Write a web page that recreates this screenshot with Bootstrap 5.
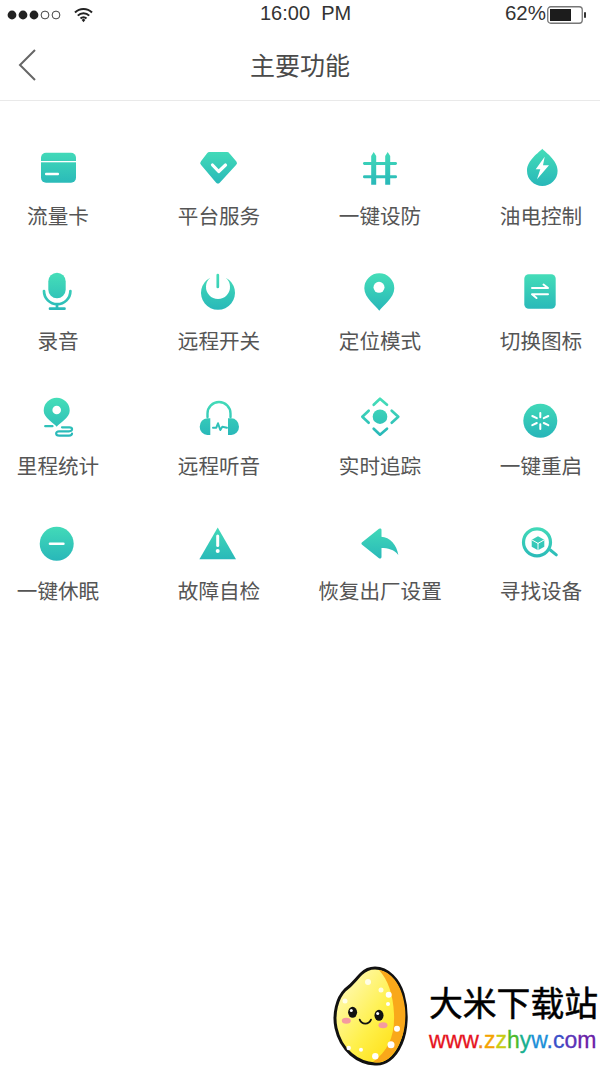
<!DOCTYPE html>
<html lang="zh-CN">
<head>
<meta charset="utf-8">
<title>主要功能</title>
<link rel="stylesheet" href="https://cdn.jsdelivr.net/npm/bootstrap@5.3.0/dist/css/bootstrap.min.css">
<style>
html,body{width:600px;height:1067px;overflow:hidden;background:#fff}
body{font-family:"Liberation Sans","Noto Sans CJK SC",sans-serif}
.screen{height:1067px}
.statusbar{height:30px;color:#333;font-size:20px;line-height:26px;padding:0 13px 4px 7px}
.st-left{width:253px}
.st-time{width:91px;white-space:pre}
.st-pct{font-size:20.5px;margin-right:1px}
.titlebar{height:71px;border-bottom:1px solid #e9e9e9}
.back-slot,.back-spacer{width:62px}
.back-slot{padding-left:18px}
.wifi-gap{margin-left:13px}
.page-title{font-size:25px;font-weight:400;color:#4a4a4a;margin:0 0 3px;line-height:32px;font-family:"Noto Sans CJK SC",sans-serif}
.func-grid{display:grid;grid-template-columns:repeat(4,100px);column-gap:61px;row-gap:32px;padding:36px 0 0 8px}
.func-item{height:93px}
.func-item svg{display:block;width:60px;height:60px;margin-bottom:3.5px}
.func-label{font-size:20.6px;line-height:28px;color:#555;white-space:nowrap;font-family:"Noto Sans CJK SC",sans-serif}
.g{fill:url(#tg)}
.gs{fill:none;stroke:url(#tg);stroke-linecap:round;stroke-linejoin:round}
.gr{fill:url(#tg);stroke:url(#tg);stroke-width:2;stroke-linejoin:round}
.w{fill:#fff}
.ws{fill:none;stroke:#fff;stroke-linecap:round;stroke-linejoin:round}
.defs-holder{display:block;width:0;height:0}
.brand{padding-right:2px;height:103px;gap:21px}
.brand-text{padding-top:4px}
.brand-name{font-family:"Noto Sans CJK SC",sans-serif;font-size:33.8px;font-weight:400;line-height:40px;color:#000;white-space:nowrap;-webkit-text-stroke:.5px #000}
.brand-url{font-size:23px;line-height:26px;white-space:nowrap;margin-top:5px;-webkit-text-stroke:.3px currentColor}
.logo-svg{display:block;width:76px;height:102px}
.u1{color:#e6141e}.u2{color:#f08a1a}.u3{color:#f5a300}.u4{color:#c8cc10}.u5{color:#4cbb2c}.u6{color:#18b090}.u7{color:#1c8fd8}.u8{color:#2a6fd0}.u9{color:#3a50c8}.u10{color:#5a35b8}.u11{color:#6a22a8}
</style>
</head>
<body>
<svg class="defs-holder" aria-hidden="true"><defs>
<linearGradient id="tg" gradientUnits="userSpaceOnUse" x1="0" y1="11" x2="0" y2="49"><stop offset="0" stop-color="#45deb8"/><stop offset="1" stop-color="#28b7b9"/></linearGradient>
<linearGradient id="egg" x1="0" y1="0" x2="1" y2="1"><stop offset="0" stop-color="#fffcd0"/><stop offset=".55" stop-color="#fff04a"/><stop offset="1" stop-color="#ffd800"/></linearGradient>
</defs></svg>
<div class="screen d-flex flex-column">

<div class="statusbar d-flex align-items-center">
  <div class="st-left d-flex align-items-center pt-1">
    <svg width="54" height="12" viewBox="0 0 54 12"><circle cx="5" cy="6" r="4.4" fill="#222"/><circle cx="16" cy="6" r="4.4" fill="#222"/><circle cx="27" cy="6" r="4.4" fill="#222"/><circle cx="38" cy="6" r="3.900" fill="none" stroke="#444"/><circle cx="49" cy="6" r="3.900" fill="none" stroke="#444"/></svg>
    <svg class="wifi-gap" width="19" height="16" viewBox="0 0 19 16"><path d="M1 5.500a12 12 0 0 1 17 0M3.800 8.600a8 8 0 0 1 11.400 0M6.500 11.500a4.200 4.200 0 0 1 6 0" fill="none" stroke="#222" stroke-width="2"/><path d="M7.700 13l1.800-1.500L11.300 13l-1.800 2.200z" fill="#222"/></svg>
  </div>
  <div class="st-time">16:00  PM</div>
  <div class="ms-auto d-flex align-items-center">
    <span class="st-pct">62%</span>
    <svg class="mt-1" width="40" height="18" viewBox="0 0 40 18"><rect x=".75" y=".75" width="34.5" height="16.5" rx="3" fill="#fff" stroke="#777" stroke-width="1.300"/><rect x="3" y="3" width="21" height="12" fill="#1c1c1c"/><rect x="37" y="6" width="2" height="6" rx="1" fill="#333"/></svg>
  </div>
</div>

<header class="titlebar d-flex align-items-center">
  <div class="back-slot"><svg class="d-block" width="19" height="32" viewBox="0 0 19 32"><path d="M17 1L2 16l15 15" fill="none" stroke="#666" stroke-width="2"/></svg></div>
  <h1 class="page-title flex-grow-1 text-center">主要功能</h1>
  <div class="back-spacer"></div>
</header>

<main class="func-grid">
  <div class="func-item d-flex flex-column align-items-center">
    <svg viewBox="0 0 60 60"><rect class="g" x="13" y="15.700" width="35" height="30" rx="5"/><rect class="w" x="13" y="24" width="35" height="1.300"/><rect class="w" x="17" y="35.700" width="14" height="2.600" rx="1"/></svg>
    <div class="func-label">流量卡</div>
  </div>
  <div class="func-item d-flex flex-column align-items-center">
    <svg viewBox="0 0 60 60"><path class="gr" d="M20.500 16h17.500a2 2 0 0 1 1.600.8l7 8.300a1.500 1.500 0 0 1-.1 2L30 45a1.500 1.500 0 0 1-2.100 0L12.700 27.100a1.500 1.500 0 0 1-.1-2l6.300-8.300a2 2 0 0 1 1.600-.8z"/><path class="ws" stroke-width="3.200" d="M23.500 28l6.200 6.500 6.800-6.500"/></svg>
    <div class="func-label">平台服务</div>
  </div>
  <div class="func-item d-flex flex-column align-items-center">
    <svg viewBox="0 0 60 60"><path class="g" d="M23.700 15l2.500 4v28.700h-5V19zM37.700 15l2.500 4v28.700h-5V19z"/><rect class="g" x="13" y="25" width="34" height="3" rx="1.400"/><rect class="g" x="13" y="38.300" width="34" height="3" rx="1.400"/></svg>
    <div class="func-label">一键设防</div>
  </div>
  <div class="func-item d-flex flex-column align-items-center">
    <svg viewBox="0 0 60 60"><path class="g" d="M31.300 11.700C34 15 46.600 23 46.600 33.700a15.300 15.300 0 0 1-30.600 0C16 23 28.600 15 31.300 11.700z"/><path class="w" d="M33.700 19.700L24.700 32.300h4.600L26 42.300l12-14h-6z"/></svg>
    <div class="func-label">油电控制</div>
  </div>

  <div class="func-item d-flex flex-column align-items-center">
    <svg viewBox="0 0 60 60"><rect class="g" x="20.300" y="10.700" width="17.400" height="25.600" rx="8.700"/><path class="gs" stroke-width="2.700" d="M16 29a13.200 13.200 0 0 0 26.400 0"/><path class="gs" stroke-width="2.700" d="M29 42.500v4M22 46.700h14.500"/></svg>
    <div class="func-label">录音</div>
  </div>
  <div class="func-item d-flex flex-column align-items-center">
    <svg viewBox="0 0 60 60"><path class="g" d="M21.300 15.700A17 17 0 1 0 36.700 15.700A12 12 0 1 1 21.300 15.700z"/><path class="gs" stroke-width="2.700" d="M28.800 13v12"/></svg>
    <div class="func-label">远程开关</div>
  </div>
  <div class="func-item d-flex flex-column align-items-center">
    <svg viewBox="0 0 60 60"><path class="g" d="M29.300 48.700C26 44 14.300 36 14.300 26.300a15 15 0 0 1 30 0C44.300 36 32.600 44 29.300 48.700z"/><circle class="w" cx="29" cy="25.300" r="5.500"/></svg>
    <div class="func-label">定位模式</div>
  </div>
  <div class="func-item d-flex flex-column align-items-center">
    <svg viewBox="0 0 60 60"><rect class="g" x="13.300" y="12.300" width="31.400" height="34.400" rx="4.500"/><path class="ws" stroke-width="2" d="M21 26h16l-4.500-3.500M37 32.300H21l4.500 3.700"/></svg>
    <div class="func-label">切换图标</div>
  </div>

  <div class="func-item d-flex flex-column align-items-center">
    <svg viewBox="0 0 60 60"><path class="g" d="M28.700 39.700C26 36 15.700 31 15.700 23.700a13 13 0 0 1 26 0C41.700 31 31.400 36 28.700 39.700z"/><circle class="w" cx="28.700" cy="23" r="4.300"/><path class="gs" stroke-width="2.200" d="M17.200 39.200h7.300M34 40.300h7.500c3.500 0 3.500 4-.5 4H31c-3.800 0-3.800 4.300.2 4.300H41c2 0 3-1 3-2"/></svg>
    <div class="func-label">里程统计</div>
  </div>
  <div class="func-item d-flex flex-column align-items-center">
    <svg viewBox="0 0 60 60"><path class="gs" stroke-width="2.400" d="M18.500 30v-3.500a11.500 11.500 0 0 1 23 0V30"/><path class="g" d="M21.300 31.300v16.700h-3a7.700 8.300 0 0 1-7.600-8.300 7.700 8.300 0 0 1 7.600-8.400zM39 31.300v16.700h3.300a7.700 8.300 0 0 0 7.700-8.300 7.700 8.300 0 0 0-7.700-8.400z"/><path class="gs" stroke-width="2" d="M24 40.700h3.300l1.700-4.400 2.300 6.700 2-3.300 4.700 1"/></svg>
    <div class="func-label">远程听音</div>
  </div>
  <div class="func-item d-flex flex-column align-items-center">
    <svg viewBox="0 0 60 60"><circle class="g" cx="30" cy="29.700" r="7.300"/><path class="gs" stroke-width="2.700" d="M23.700 17.700l6.300-6 7 6M23.700 41.700l6.300 6 7-6M18.700 23.700l-6.400 6 6.400 6M41.700 23.700l6.600 6-6.600 6"/></svg>
    <div class="func-label">实时追踪</div>
  </div>
  <div class="func-item d-flex flex-column align-items-center">
    <svg viewBox="0 0 60 60"><circle class="g" cx="29.300" cy="33.700" r="17"/><path class="ws" stroke-width="2" d="M29.300 26v4.300M29.300 37.200v4.800M21.300 29l4.500 2.200M37.300 29l-4.500 2.200M21.300 38.200l4.500-2.200M37.300 38.200l-4.500-2.200"/></svg>
    <div class="func-label">一键重启</div>
  </div>

  <div class="func-item d-flex flex-column align-items-center">
    <svg viewBox="0 0 60 60"><circle class="g" cx="28.700" cy="31.700" r="17"/><path class="ws" stroke-width="2.600" d="M22 31.700h13.400"/></svg>
    <div class="func-label">一键休眠</div>
  </div>
  <div class="func-item d-flex flex-column align-items-center">
    <svg viewBox="0 0 60 60"><path class="g" d="M28.700 15.500L47 47.300H10.400z"/><path class="ws" stroke-width="3" d="M28.700 24v9.500"/><circle class="w" cx="28.700" cy="39" r="2"/></svg>
    <div class="func-label">故障自检</div>
  </div>
  <div class="func-item d-flex flex-column align-items-center">
    <svg viewBox="0 0 60 60"><path class="g" d="M29 16.800a1.500 1.500 0 0 1 2.500 1.200v27a1.500 1.500 0 0 1-2.500 1.200L11.800 32.500a1.500 1.500 0 0 1 0-2z"/><path class="g" d="M31 24.700C40 25 47 33 48.300 43 44 37.500 38 36 31 36z"/></svg>
    <div class="func-label text-nowrap">恢复出厂设置</div>
  </div>
  <div class="func-item d-flex flex-column align-items-center">
    <svg viewBox="0 0 60 60"><circle class="gs" stroke-width="3.200" cx="26" cy="30.300" r="13.500"/><path class="gs" stroke-width="3" d="M39.300 38l6 4.800"/><path class="g" d="M27 24.200l6.300 3.500v7.100L27 38.300l-6.300-3.500v-7.100z"/><path class="ws" stroke-width="1" d="M21 28l6 3.400 6-3.400M27 31.400V38"/></svg>
    <div class="func-label">寻找设备</div>
  </div>
</main>

<footer class="brand mt-auto d-flex justify-content-end align-items-center">
  <svg class="logo-svg" viewBox="-1 -1 76 102">
    <path d="M42 2C55 2 66 14 70 28c5 17 4 37-2 50-6 14-16 21-26 20C25 97 8 85 3 62 0 48 4 32 12 24c8-6 10-10 16-16 4-4 8-6 14-6z" fill="url(#egg)" stroke="#111" stroke-width="3"/>
    <path d="M46 4c14 2 24 18 26 38 2 20-4 40-17 51-5 3-10 4-15 3 15-11 22-26 21-48-1-20-6-34-15-44z" fill="#f9a81a"/>
    <circle cx="55.700" cy="28.700" r="3" fill="#fff"/><circle cx="64" cy="62.700" r="3" fill="#fff"/><circle cx="58" cy="78.700" r="3.500" fill="#fff"/><circle cx="42.300" cy="90.300" r="3.200" fill="#fff"/><circle cx="28" cy="83.700" r="2" fill="#fff"/><circle cx="15.700" cy="82" r="2.200" fill="#fff"/><circle cx="35" cy="16" r="3" fill="#fff" fill-opacity=".8"/><circle cx="48" cy="24" r="2.500" fill="#fff" fill-opacity=".8"/><circle cx="12" cy="35" r="2.500" fill="#fff" fill-opacity=".8"/><circle cx="55" cy="38" r="2" fill="#fff"/>
    <ellipse cx="19.600" cy="46.300" rx="4.500" ry="5.500" fill="#111"/><ellipse cx="46" cy="49.300" rx="4.500" ry="5.500" fill="#111"/><circle cx="18.300" cy="44.500" r="1.500" fill="#fff"/><circle cx="44.700" cy="47.500" r="1.500" fill="#fff"/>
    <ellipse cx="13.300" cy="54.700" rx="4.500" ry="3" fill="#f59aa0"/><ellipse cx="50" cy="59.300" rx="4.500" ry="3" fill="#f59aa0"/>
    <path d="M26.700 53.700c2 5 9 5.500 11.300 0" fill="none" stroke="#111" stroke-width="1.800" stroke-linecap="round"/>
  </svg>
  <div class="brand-text">
    <div class="brand-name">大米下载站</div>
    <div class="brand-url"><span class="u1">www</span><span class="u2">.</span><span class="u3">z</span><span class="u4">z</span><span class="u5">h</span><span class="u6">y</span><span class="u7">w</span><span class="u8">.</span><span class="u9">c</span><span class="u10">o</span><span class="u11">m</span></div>
  </div>
</footer>
</div>
<script src="https://cdn.jsdelivr.net/npm/bootstrap@5.3.0/dist/js/bootstrap.bundle.min.js"></script>
</body>
</html>
